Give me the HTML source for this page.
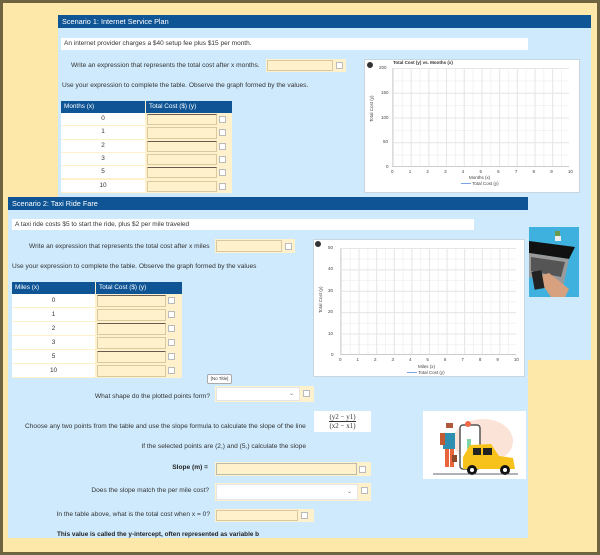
<!DOCTYPE html>
<html><head><meta charset="utf-8"><style>
*{margin:0;padding:0;box-sizing:border-box}
body{width:600px;height:555px;overflow:hidden;font-family:"Liberation Sans",sans-serif;color:#333;font-size:6px}
.frame{position:absolute;left:0;top:0;width:600px;height:555px;background:#fde7a9;border:3px solid #6e6440}
.a{position:absolute}
.blue{background:#cfeafc}
.hdr{background:#0f5596;color:#fff;font-size:7.3px;line-height:13px;padding-left:4px}
.wbox{background:#fff;font-size:6.5px;line-height:12px;padding-left:3px}
.t{font-size:6.6px;white-space:nowrap}
.inp{background:#fff1cc;border:1px solid #d9c8a0}
.cbw{background:#fff1cc}
.cb{position:absolute;width:7px;height:7px;border:1px solid #bbb;background:#fff}
.sel{background:#fff;border:1px solid #e5e5e5}
.th{background:#0f5596;color:#fff;font-size:6.4px;line-height:11px;padding-left:3px}
.td{background:#fff;text-align:center;font-size:6.4px}
.gbox{background:#fff;border:1px solid #c9d6de}
.grid{background-color:#fff;
background-image:linear-gradient(to right,#e6e6e6 1px,transparent 1px),linear-gradient(to bottom,#e6e6e6 1px,transparent 1px),linear-gradient(to right,#f3f3f3 1px,transparent 1px),linear-gradient(to bottom,#f3f3f3 1px,transparent 1px);border-left:1px solid #ddd;border-bottom:1px solid #ccc}
.ax{font-size:4.5px;color:#444}
</style></head><body>
<div class="frame"></div>
<!-- panel 1 -->
<div class="a blue" style="left:58px;top:15px;width:533px;height:345px"></div>
<div class="a hdr" style="left:58px;top:15px;width:533px;height:13px">Scenario 1: Internet Service Plan</div>
<div class="a wbox" style="left:61px;top:38px;width:467px;height:12px">An internet provider charges a $40 setup fee plus $15 per month.</div>
<div class="a t" style="left:71px;top:62px">Write an expression that represents the total cost after x months.</div>
<div class="a cbw" style="left:266px;top:59px;width:80px;height:13px"></div>
<div class="a inp" style="left:267px;top:60px;width:66px;height:11px"></div>
<div class="cb" style="left:336px;top:62px"></div>
<div class="a t" style="left:62px;top:82px">Use your expression to complete the table. Observe the graph formed by the values.</div>
<div class="a" style="left:61px;top:101px;width:171px;height:92px;background:#fff1cc">
 <div class="a th" style="left:0;top:0;width:84px;height:12px">Months (x)</div>
 <div class="a th" style="left:85px;top:0;width:86px;height:12px">Total Cost ($) (y)</div>
</div>
<div id="t1"></div>
<!-- graph 1 -->
<div class="a gbox" style="left:364px;top:59px;width:216px;height:134px"></div>
<div class="a" style="left:367px;top:62px;width:6px;height:6px;border-radius:50%;background:#333;border:1.5px solid #333"></div>
<div class="a" style="left:393px;top:60px;font-size:4.5px;font-weight:bold;color:#333">Total Cost (y) vs. Months (x)</div>
<div class="a grid" style="left:392px;top:68px;width:177px;height:99px;background-size:17.7px 100%,100% 24.75px,8.85px 100%,100% 12.375px"></div>
<div class="a ax" style="left:379px;top:65px">200</div><div class="a ax" style="left:381px;top:90px">150</div><div class="a ax" style="left:381px;top:115px">100</div><div class="a ax" style="left:383px;top:139px">50</div><div class="a ax" style="left:386px;top:164px">0</div>
<div class="a ax" style="left:369px;top:122px;transform:rotate(-90deg);transform-origin:left top">Total Cost (y)</div>
<div class="a ax" style="left:391px;top:169px;width:182px;display:flex;justify-content:space-between"><span>0</span><span>1</span><span>2</span><span>3</span><span>4</span><span>5</span><span>6</span><span>7</span><span>8</span><span>9</span><span>10</span></div>
<div class="a ax" style="left:469px;top:175px">Months (x)</div>
<div class="a ax" style="left:461px;top:181px"><span style="display:inline-block;width:10px;height:1px;background:#7aa5e0;vertical-align:middle"></span> Total Cost (y)</div>
<!-- panel 2 -->
<div class="a blue" style="left:8px;top:197px;width:520px;height:341px"></div>
<div class="a hdr" style="left:8px;top:197px;width:520px;height:13px">Scenario 2: Taxi Ride Fare</div>
<div class="a wbox" style="left:12px;top:219px;width:462px;height:11px;line-height:11px">A taxi ride costs $5 to start the ride, plus $2 per mile traveled</div>
<div class="a t" style="left:29px;top:243px">Write an expression that represents the total cost after x miles</div>
<div class="a cbw" style="left:215px;top:239px;width:80px;height:14px"></div>
<div class="a inp" style="left:216px;top:240px;width:66px;height:12px"></div>
<div class="cb" style="left:285px;top:243px"></div>
<div class="a t" style="left:12px;top:263px">Use your expression to complete the table.  Observe the graph formed by the values</div>
<div class="a" style="left:12px;top:282px;width:170px;height:96px;background:#fff1cc">
 <div class="a th" style="left:0;top:0;width:83px;height:12px">Miles (x)</div>
 <div class="a th" style="left:84px;top:0;width:86px;height:12px">Total Cost ($) (y)</div>
</div>
<div id="t2"></div>
<!-- graph 2 -->
<div class="a gbox" style="left:313px;top:239px;width:212px;height:138px"></div>
<div class="a" style="left:315px;top:241px;width:6px;height:6px;border-radius:50%;background:#333"></div>
<div class="a grid" style="left:340px;top:248px;width:176px;height:107px;background-size:17.6px 100%,100% 21.4px,8.8px 100%,100% 10.7px"></div>
<div class="a ax" style="left:328px;top:245px">50</div><div class="a ax" style="left:328px;top:266px">40</div><div class="a ax" style="left:328px;top:288px">30</div><div class="a ax" style="left:328px;top:309px">20</div><div class="a ax" style="left:328px;top:331px">10</div><div class="a ax" style="left:331px;top:352px">0</div>
<div class="a ax" style="left:318px;top:313px;transform:rotate(-90deg);transform-origin:left top">Total Cost (y)</div>
<div class="a ax" style="left:339px;top:357px;width:180px;display:flex;justify-content:space-between"><span>0</span><span>1</span><span>2</span><span>3</span><span>4</span><span>5</span><span>6</span><span>7</span><span>8</span><span>9</span><span>10</span></div>
<div class="a ax" style="left:418px;top:364px">Miles (x)</div>
<div class="a ax" style="left:407px;top:370px"><span style="display:inline-block;width:10px;height:1px;background:#7aa5e0;vertical-align:middle"></span> Total Cost (y)</div>
<!-- laptop photo -->
<svg class="a" style="left:529px;top:227px" width="50" height="70" viewBox="0 0 50 70">
<rect width="50" height="70" fill="#3fb1de"/>
<rect x="26" y="4" width="5" height="6" fill="#6a9a4a"/><rect x="26" y="9" width="6" height="5" fill="#eee"/>
<polygon points="0,14 46,20 40,32 0,26" fill="#111"/>
<polygon points="0,26 40,32 34,60 0,50" fill="#9a9a9a"/>
<polygon points="2,30 36,35 32,50 2,44" fill="#555"/>
<polygon points="8,50 20,46 40,62 36,70 22,70" fill="#d7a07e"/>
<rect x="4" y="44" width="10" height="18" fill="#222" transform="rotate(-10 9 53)"/>
</svg>
<!-- bottom questions -->
<div class="a" style="left:207px;top:374px;width:25px;height:10px;background:#fff;border:1px solid #aaa;border-radius:2px;font-size:4.5px;line-height:8px;text-align:center">[No Title]</div>
<div class="a t" style="right:390px;top:393px">What shape do the plotted points form?</div>
<div class="a cbw" style="left:215px;top:386px;width:99px;height:16px"></div>
<div class="a sel" style="left:216px;top:387px;width:84px;height:14px"><span style="position:absolute;right:5px;top:2px;font-size:6px;color:#777">⌄</span></div>
<div class="cb" style="left:303px;top:390px"></div>
<div class="a" style="left:314px;top:411px;width:57px;height:21px;background:#fff;font-family:'Liberation Serif',serif;font-size:7px;text-align:center;line-height:9px;padding-top:2px"><span style="border-bottom:1px solid #333">(y2 − y1)</span><br>(x2 − x1)</div>
<div class="a t" style="left:25px;top:423px">Choose any two points from the table and use the slope formula to calculate the slope of the line</div>
<div class="a t" style="right:294px;top:443px">If the selected points are (2,) and (5,) calculate the slope</div>
<div class="a t" style="right:392px;top:464px;font-weight:bold;color:#222">Slope (m) =</div>
<div class="a cbw" style="left:215px;top:462px;width:156px;height:14px"></div>
<div class="a inp" style="left:216px;top:463px;width:141px;height:12px;border-color:#bba"></div>
<div class="cb" style="left:359px;top:466px"></div>
<div class="a t" style="right:391px;top:487px">Does the slope match the per mile cost?</div>
<div class="a cbw" style="left:215px;top:483px;width:156px;height:18px"></div>
<div class="a sel" style="left:216px;top:484px;width:142px;height:16px"><span style="position:absolute;right:5px;top:3px;font-size:6px;color:#777">⌄</span></div>
<div class="cb" style="left:361px;top:487px"></div>
<div class="a t" style="right:390px;top:511px">In the table above, what is the total cost when x = 0?</div>
<div class="a cbw" style="left:215px;top:509px;width:99px;height:13px"></div>
<div class="a inp" style="left:216px;top:510px;width:82px;height:11px"></div>
<div class="cb" style="left:301px;top:512px"></div>
<div class="a" style="left:57px;top:531px;font-size:6.4px;font-weight:bold;color:#222">This value is called the y-intercept, often represented as variable b</div>
<!-- taxi illustration -->
<svg class="a" style="left:423px;top:411px" width="103" height="68" viewBox="0 0 103 68">
<rect width="103" height="68" fill="#fff"/>
<ellipse cx="60" cy="30" rx="30" ry="22" fill="#fbe3d8"/>
<rect x="37" y="14" width="20" height="44" rx="3" fill="#fff" stroke="#555" stroke-width="1.5"/>
<rect x="44" y="28" width="4" height="10" fill="#7fd4a8"/>
<circle cx="45" cy="13" r="3" fill="#f06a4a"/>
<rect x="23" y="12" width="7" height="5" fill="#b0583a"/>
<rect x="20" y="22" width="12" height="16" fill="#2f8fb0"/>
<rect x="17" y="22" width="5" height="12" fill="#c05a30"/>
<rect x="22" y="38" width="4" height="18" fill="#e8643a"/><rect x="27" y="38" width="4" height="18" fill="#e8643a"/>
<rect x="29" y="44" width="5" height="7" fill="#8a4a2a"/>
<path d="M40 46 L47 34 L68 33 L76 45 L90 47 L92 58 L40 58Z" fill="#f7c21c"/>
<rect x="50" y="37" width="8" height="7" fill="#222"/><rect x="60" y="37" width="9" height="7" fill="#222"/>
<circle cx="49" cy="59" r="5" fill="#111"/><circle cx="49" cy="59" r="2" fill="#fff"/>
<circle cx="82" cy="59" r="5" fill="#111"/><circle cx="82" cy="59" r="2" fill="#fff"/>
<line x1="10" y1="63" x2="95" y2="63" stroke="#333" stroke-width="0.8"/>
</svg>
<script>
function tbl(id,x,y,w1,w2,rh,vals,ix,iw){var h='';for(var i=0;i<vals.length;i++){var ty=y+i*rh;
h+='<div class="a td" style="left:'+x+'px;top:'+ty+'px;width:'+w1+'px;height:'+(rh-1)+'px;line-height:'+(rh-1)+'px">'+vals[i]+'</div>';
h+='<div class="a inp" style="left:'+ix+'px;top:'+(ty+1)+'px;width:'+iw+'px;height:'+(rh-2)+'px;'+(i%2==0?'border-top-color:#6b5a50':'')+'"></div>';
h+='<div class="cb" style="left:'+(ix+iw+2)+'px;top:'+(ty+3)+'px"></div>';}
document.getElementById(id).innerHTML=h;}
tbl('t1',61,113,84,86,13.3,['0','1','2','3','5','10'],147,70);
tbl('t2',12,294,83,86,14,['0','1','2','3','5','10'],97,69);
</script>
</body></html>
